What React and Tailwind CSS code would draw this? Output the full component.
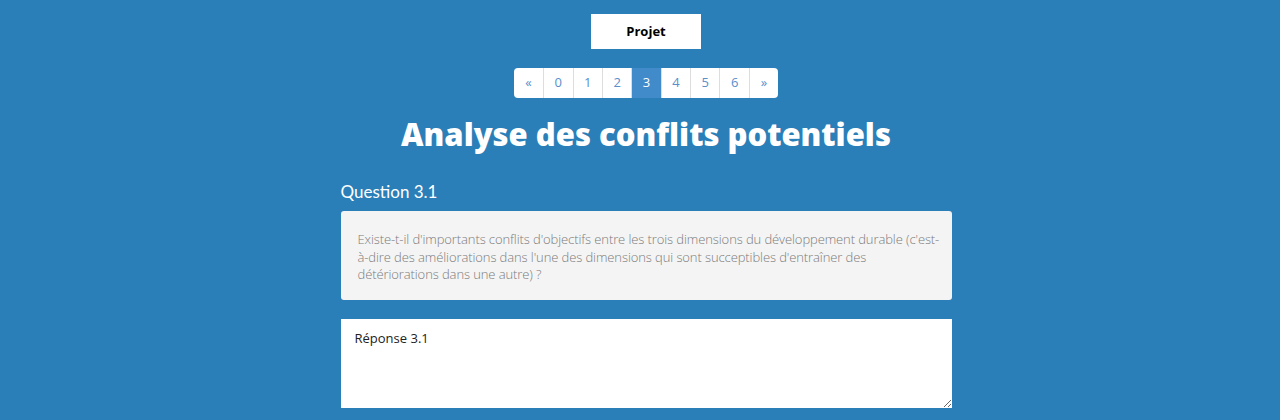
export default function App() {
  const pages = ["«", "0", "1", "2", "3", "4", "5", "6", "»"];
  return (
    <div
      className="w-[1280px] h-[420px] overflow-hidden bg-[#2a7fb8] pl-3"
      style={{ fontFamily: '"Open Sans", sans-serif' }}
    >
      <div className="flex flex-col items-center">
        <button className="mt-[14px] w-[110px] h-[35px] bg-white text-[13px] font-bold text-black">
          Projet
        </button>

        <div className="mt-[19px] flex h-[30px] rounded-[4px] bg-white">
          {pages.map((p, i) => (
            <div
              key={p}
              className={`flex w-[29.4px] items-center justify-center text-[13px] ${
                p === "3"
                  ? "bg-[#428bca] text-white"
                  : "text-[#5a8fcc]"
              } ${i > 0 ? "border-l border-[#dddddd]" : ""} ${
                i === 0 ? "rounded-l-[4px]" : ""
              } ${i === pages.length - 1 ? "rounded-r-[4px]" : ""}`}
            >
              {p}
            </div>
          ))}
        </div>

        <h1 className="mt-[16px] text-[31px] font-extrabold leading-[40px] text-white">
          Analyse des conflits potentiels
        </h1>

        <div className="mt-[26px] w-[611px]">
          <h2
            className="text-[17px] leading-[24px] text-white"
            style={{ fontFamily: "Lato, sans-serif" }}
          >
            Question 3.1
          </h2>
          <div className="mt-[7px] h-[89px] rounded-[3px] bg-[#f4f4f4] pl-[17px] pr-[6px] pt-[20px] text-[13px] font-light leading-[17.5px] tracking-[-0.1px] text-[#7b7b7b]">
            Existe-t-il d'importants conflits d'objectifs entre les trois dimensions du développement durable (c'est-à-dire des améliorations dans l'une des dimensions qui sont succeptibles d'entraîner des détériorations dans une autre) ?
          </div>
          <textarea
            className="mt-[19px] block h-[89px] w-full bg-white px-[14px] pt-[10px] text-[13px] text-[#222] outline-none"
            defaultValue="Réponse 3.1"
          />
        </div>
      </div>
    </div>
  );
}
